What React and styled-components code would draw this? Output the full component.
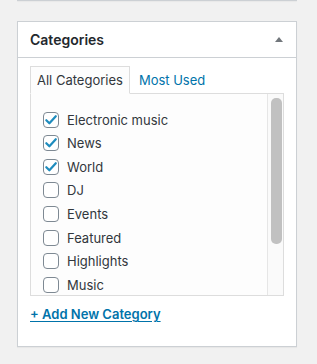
import React from 'react';
import styled, { createGlobalStyle } from 'styled-components';

const GlobalStyle = createGlobalStyle`
  body {
    margin: 0;
    background: #f1f1f1;
    font-family: Inter, 'Liberation Sans', sans-serif;
    color: #32373c;
  }
`;

const Page = styled.div`
  padding: 0 20px 0 17px;
  min-height: 364px;
  box-sizing: border-box;
`;

const PrevBoxEdge = styled.div`
  height: 1px;
  background: #ccd0d4;
  box-shadow: 0 1px 1px rgba(0, 0, 0, 0.04);
  margin-bottom: 20px;
`;

const PostBox = styled.div`
  background: #fff;
  border: 1px solid #ccd0d4;
  box-shadow: 0 1px 1px rgba(0, 0, 0, 0.04);
`;

const BoxHeader = styled.div`
  display: flex;
  align-items: center;
  justify-content: space-between;
  height: 35px;
  padding: 0 13px 0 12px;
  border-bottom: 1px solid #ccd0d4;
`;

const BoxTitle = styled.h2`
  margin: 0;
  font-size: 14px;
  font-weight: 600;
  color: #23282d;
`;

const Toggle = styled.span`
  width: 0;
  height: 0;
  border-left: 4px solid transparent;
  border-right: 4px solid transparent;
  border-bottom: 5px solid #72777c;
  margin-top: -1px;
`;

const Inside = styled.div`
  padding: 8px 12px 22px;
`;

const Tabs = styled.ul`
  display: flex;
  gap: 2px;
  margin: 0;
  padding: 0;
  list-style: none;
`;

const Tab = styled.li`
  height: 26px;
  display: flex;
  align-items: center;
  padding: 0 6px;
  font-size: 13px;
  border: 1px solid ${p => (p.active ? '#dddddd' : 'transparent')};
  border-bottom-color: ${p => (p.active ? '#fdfdfd' : 'transparent')};
  background: ${p => (p.active ? '#fdfdfd' : 'transparent')};
  color: ${p => (p.active ? '#32373c' : '#0073aa')};
  margin-bottom: -1px;
  position: relative;
  z-index: 1;
`;

const Panel = styled.div`
  display: flex;
  height: 201px;
  border: 1px solid #dddddd;
  background: #fdfdfd;
`;

const Checklist = styled.ul`
  flex: 1;
  overflow: hidden;
  margin: 0;
  padding: 14px 12px 0;
  list-style: none;
`;

const ScrollTrack = styled.div`
  width: 11px;
  padding: 4px 1px 0 3px;
  background: #fafafa;
  border-left: 1px solid #e6e6e6;
`;

const ScrollThumb = styled.div`
  height: 146px;
  border-radius: 5px;
  background: #c1c1c1;
`;

const Item = styled.li`
  height: 23.57px;
  display: flex;
  align-items: center;
  gap: 8px;
  font-size: 13px;
  color: #32373c;
`;

const Box = styled.span`
  width: 16px;
  height: 16px;
  box-sizing: border-box;
  border: 1px solid #7e8993;
  border-radius: 4px;
  background: #fff;
  display: flex;
  align-items: center;
  justify-content: center;
  flex-shrink: 0;
`;

const AddLink = styled.a`
  display: inline-block;
  margin-top: 9px;
  font-size: 13px;
  font-weight: 600;
  line-height: 19px;
  color: #0073aa;
  text-decoration: underline;
  text-underline-offset: 2px;
`;

const categories = [
  { name: 'Electronic music', checked: true },
  { name: 'News', checked: true },
  { name: 'World', checked: true },
  { name: 'DJ' },
  { name: 'Events' },
  { name: 'Featured' },
  { name: 'Highlights' },
  { name: 'Music' },
];

function Checkbox({ checked }) {
  return (
    <Box>
      {checked && (
        <svg width="14" height="14" viewBox="0 0 14 14">
          <path d="M2.3 7.2 L5.4 10.3 L11.8 3.2" fill="none" stroke="#1e8cbe" strokeWidth="2.2" strokeLinecap="round" strokeLinejoin="round" />
        </svg>
      )}
    </Box>
  );
}

export default function App() {
  return (
    <Page>
      <GlobalStyle />
      <PrevBoxEdge />
      <PostBox>
        <BoxHeader>
          <BoxTitle>Categories</BoxTitle>
          <Toggle />
        </BoxHeader>
        <Inside>
          <Tabs>
            <Tab active>All Categories</Tab>
            <Tab>Most Used</Tab>
          </Tabs>
          <Panel>
            <Checklist>
              {categories.map(c => (
                <Item key={c.name}>
                  <Checkbox checked={c.checked} />
                  {c.name}
                </Item>
              ))}
            </Checklist>
            <ScrollTrack>
              <ScrollThumb />
            </ScrollTrack>
          </Panel>
          <AddLink href="#">+ Add New Category</AddLink>
        </Inside>
      </PostBox>
    </Page>
  );
}
